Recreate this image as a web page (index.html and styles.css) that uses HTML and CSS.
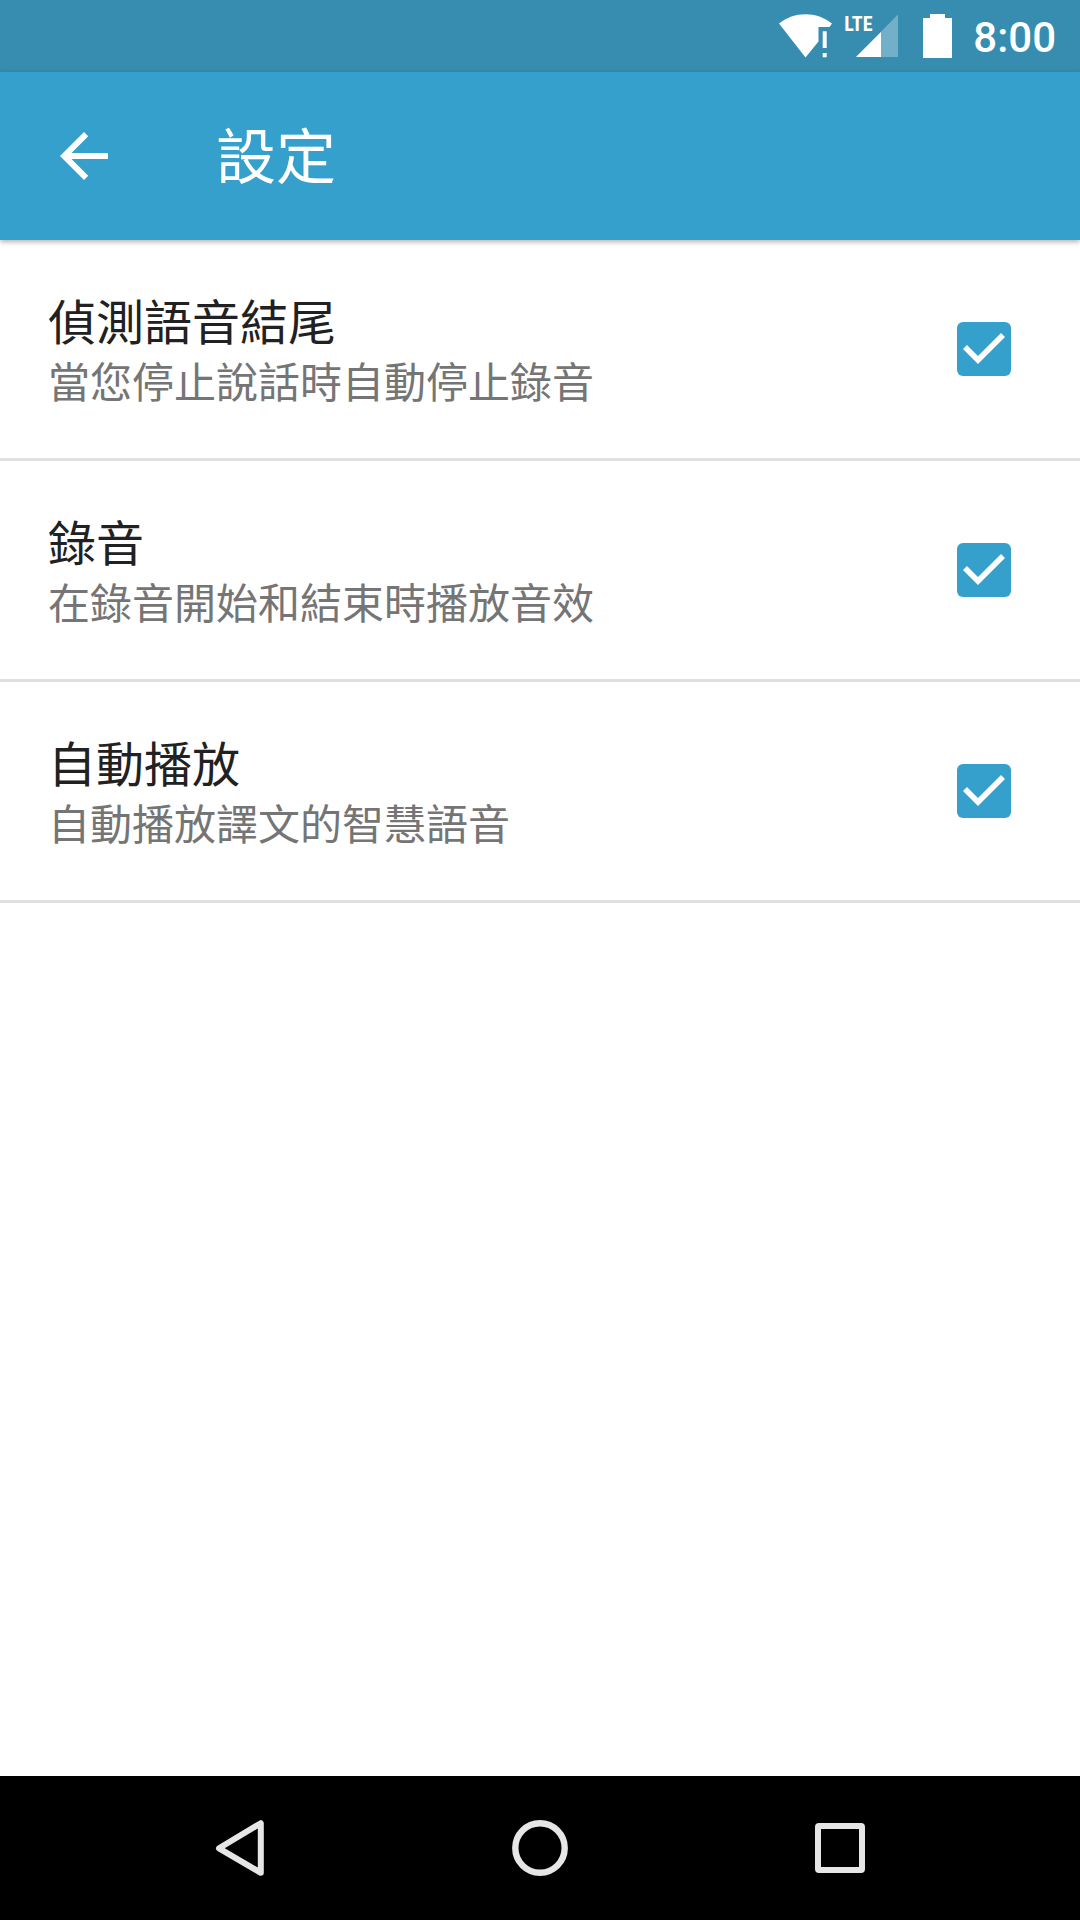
FILE: index.html
```html
<!DOCTYPE html>
<html lang="zh-Hant">
<head>
<meta charset="utf-8">
<meta name="viewport" content="width=device-width, initial-scale=1">
<title>設定</title>
<link rel="stylesheet" href="styles.css">
</head>
<body>
<div class="screen">
  <div class="status-bar">
    <svg class="wifi-icon" width="54" height="44" viewBox="0 0 54 44" aria-hidden="true">
      <path d="M0 9.500C15-3 38-3 53 9.500L50.500 13H39.500V27.500L26.500 43.500Z" fill="#fff"/>
      <path d="M43.700 17.300h4v16.700h-4zM43.700 39h4v4.300h-4z" fill="#fff"/>
    </svg>
    <div class="signal">
      <span class="network-type">LTE</span>
      <svg class="signal-icon" width="42" height="44" viewBox="0 0 42 44" aria-hidden="true">
        <path d="M42 .500V43H0Z" fill="#fff" fill-opacity=".3"/>
        <path d="M25 18V43H0Z" fill="#fff"/>
      </svg>
    </div>
    <svg class="battery-icon" width="29" height="44" viewBox="0 0 29 44" aria-hidden="true">
      <path d="M7 0h15v4h7v40H0V4h7z" fill="#fff"/>
    </svg>
    <time class="clock">8:00</time>
  </div>

  <header class="app-bar">
    <button class="back-button" type="button" aria-label="返回">
      <svg width="72" height="72" viewBox="0 0 24 24" aria-hidden="true">
        <path d="M20 11H7.830l5.590-5.590L12 4l-8 8 8 8 1.410-1.410L7.830 13H20v-2z" fill="#fff"/>
      </svg>
    </button>
    <h1 class="app-title">設定</h1>
  </header>

  <main class="settings">
    <label class="setting">
      <span class="setting-text">
        <span class="setting-name">偵測語音結尾</span>
        <span class="setting-summary">當您停止說話時自動停止錄音</span>
      </span>
      <input class="setting-check" type="checkbox" checked>
    </label>
    <label class="setting">
      <span class="setting-text">
        <span class="setting-name">錄音</span>
        <span class="setting-summary">在錄音開始和結束時播放音效</span>
      </span>
      <input class="setting-check" type="checkbox" checked>
    </label>
    <label class="setting">
      <span class="setting-text">
        <span class="setting-name">自動播放</span>
        <span class="setting-summary">自動播放譯文的智慧語音</span>
      </span>
      <input class="setting-check" type="checkbox" checked>
    </label>
  </main>

  <nav class="nav-bar">
    <button class="nav-button" type="button" aria-label="返回">
      <svg width="60" height="60" viewBox="0 0 60 60" aria-hidden="true">
        <path d="M9 30.300 50.800 5.200V54.800Z" fill="none" stroke="#e6e6e6" stroke-width="6" stroke-linejoin="round"/>
      </svg>
    </button>
    <button class="nav-button" type="button" aria-label="首頁">
      <svg width="60" height="60" viewBox="0 0 60 60" aria-hidden="true">
        <circle cx="30" cy="30" r="24.700" fill="none" stroke="#e6e6e6" stroke-width="6.400"/>
      </svg>
    </button>
    <button class="nav-button" type="button" aria-label="最近使用">
      <svg width="60" height="60" viewBox="0 0 60 60" aria-hidden="true">
        <rect x="8" y="8" width="44" height="44" rx="1" fill="none" stroke="#e6e6e6" stroke-width="6" stroke-linejoin="round"/>
      </svg>
    </button>
  </nav>
</div>
</body>
</html>
```
FILE: styles.css
```css
* {
  box-sizing: border-box;
}

body {
  margin: 0;
  background: #fff;
  color: #212121;
  font-family: Roboto, "Noto Sans CJK TC", sans-serif;
}

button {
  margin: 0;
  padding: 0;
  border: 0;
  background: none;
}

svg {
  display: block;
}

.screen {
  display: flex;
  flex-direction: column;
  min-height: 100vh;
}

.status-bar {
  display: flex;
  justify-content: flex-end;
  align-items: center;
  height: 72px;
  padding-right: 24px;
  background: #368db0;
  color: #fff;
}

.signal {
  position: relative;
  margin-left: 23px;
}

.network-type {
  position: absolute;
  top: 0;
  left: -12px;
  font: bold 20px/20px "Roboto Condensed", "Liberation Sans Narrow", sans-serif;
}

.battery-icon {
  margin-left: 25px;
}

.clock {
  margin-left: 21px;
  padding-top: 4px;
  font-size: 42px;
  font-weight: 500;
  line-height: 60px;
}

.app-bar {
  position: relative;
  display: flex;
  align-items: center;
  gap: 96px;
  height: 168px;
  padding: 0 48px;
  background: #35a0cb;
  box-shadow: 0 2px 5px rgba(0, 0, 0, 0.3);
}

.app-title {
  margin: 0;
  padding-top: 6px;
  color: #fff;
  font-size: 60px;
  font-weight: 400;
  line-height: 84px;
}

.settings {
  flex: 1;
}

.setting {
  display: flex;
  justify-content: space-between;
  align-items: center;
  min-height: 221px;
  padding: 0 69px 0 48px;
  border-bottom: 3px solid #e0e0e0;
}

.setting-text {
  display: flex;
  flex-direction: column;
  padding-top: 10px;
}

.setting-name {
  font-size: 48px;
  line-height: 60px;
}

.setting-summary {
  color: #757575;
  font-size: 42px;
  line-height: 60px;
}

.setting-check {
  appearance: none;
  width: 54px;
  height: 54px;
  margin: 0;
  border: 6px solid #757575;
  border-radius: 6px;
}

.setting-check:checked {
  border: 0;
  background: #35a0cb;
}

.setting-check:checked::before {
  content: "";
  display: block;
  width: 54px;
  height: 54px;
  background: #fff;
  clip-path: polygon(6px 27px, 10px 23px, 21px 34px, 44px 11px, 48px 15px, 21px 42px);
}

.nav-bar {
  display: flex;
  justify-content: center;
  gap: 240px;
  padding: 42px 0;
  background: #000;
}
```
